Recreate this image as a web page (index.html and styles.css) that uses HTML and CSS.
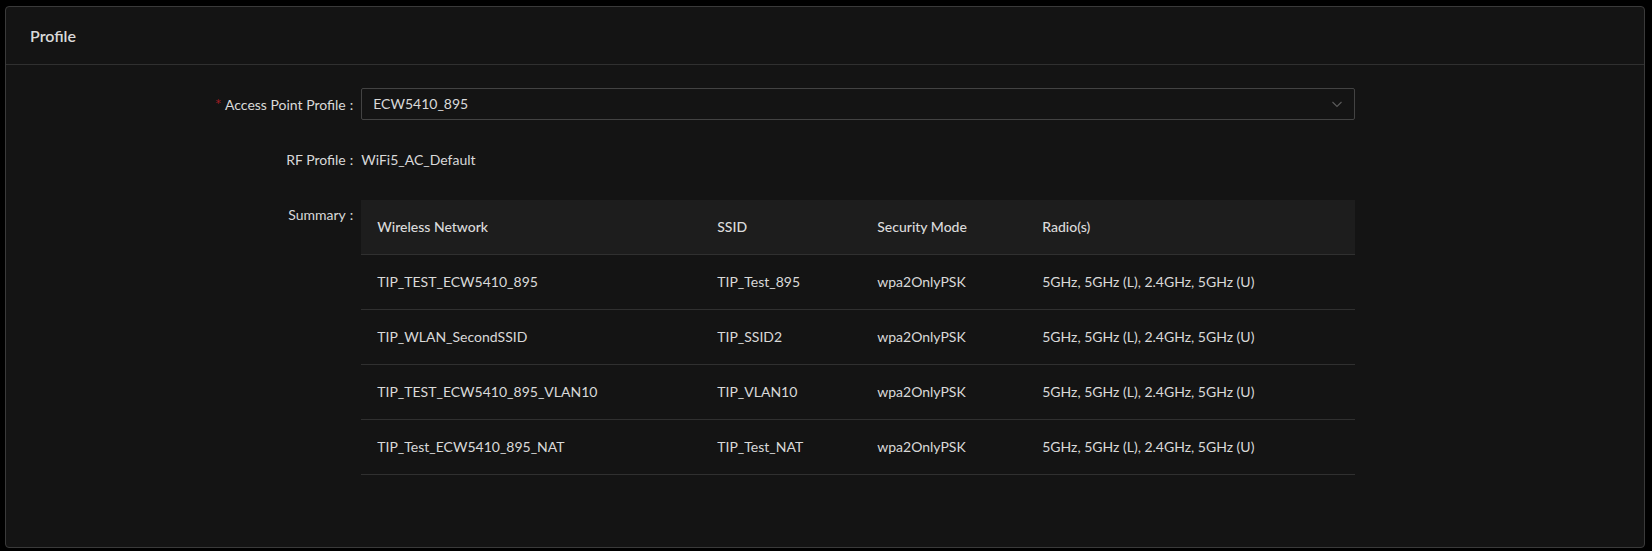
FILE: index.html
```html
<!DOCTYPE html>
<html>
<head>
<meta charset="utf-8">
<link rel="stylesheet" href="styles.css">
</head>
<body>
<div class="card">
  <div class="card-head">Profile</div>
  <div class="card-body">
    <div class="form-item">
      <div class="label"><span class="req">*</span>Access Point Profile<span class="colon">:</span></div>
      <div class="control">
        <div class="select">
          <span class="select-value">ECW5410_895</span>
          <svg class="arrow" width="12" height="12" viewBox="0 0 12 12"><path d="M1.5 4 L6 8.5 L10.5 4" fill="none" stroke="currentColor" stroke-width="1.1"/></svg>
        </div>
      </div>
    </div>
    <div class="form-item">
      <div class="label">RF Profile<span class="colon">:</span></div>
      <div class="control"><span class="static">WiFi5_AC_Default</span></div>
    </div>
    <div class="form-item top">
      <div class="label label-top">Summary<span class="colon">:</span></div>
      <div class="control">
        <table class="table">
          <colgroup><col class="c1"><col class="c2"><col class="c3"><col class="c4"></colgroup>
          <thead>
            <tr><th>Wireless Network</th><th>SSID</th><th>Security Mode</th><th>Radio(s)</th></tr>
          </thead>
          <tbody>
            <tr><td>TIP_TEST_ECW5410_895</td><td>TIP_Test_895</td><td>wpa2OnlyPSK</td><td>5GHz, 5GHz (L), 2.4GHz, 5GHz (U)</td></tr>
            <tr><td>TIP_WLAN_SecondSSID</td><td>TIP_SSID2</td><td>wpa2OnlyPSK</td><td>5GHz, 5GHz (L), 2.4GHz, 5GHz (U)</td></tr>
            <tr><td>TIP_TEST_ECW5410_895_VLAN10</td><td>TIP_VLAN10</td><td>wpa2OnlyPSK</td><td>5GHz, 5GHz (L), 2.4GHz, 5GHz (U)</td></tr>
            <tr><td>TIP_Test_ECW5410_895_NAT</td><td>TIP_Test_NAT</td><td>wpa2OnlyPSK</td><td>5GHz, 5GHz (L), 2.4GHz, 5GHz (U)</td></tr>
          </tbody>
        </table>
      </div>
    </div>
  </div>
</div>
</body>
</html>
```
FILE: styles.css
```css
html, body {
  margin: 0;
  padding: 0;
  background: #000;
}
body {
  padding: 6px 7px 3px 5px;
  font-family: Lato, "Noto Sans", sans-serif;
  font-size: 14px;
  color: rgba(255,255,255,0.85);
  line-height: 1.5715;
}
.card {
  background: #141414;
  border: 1px solid #3a3a3a;
  border-radius: 4px;
  box-sizing: border-box;
  height: 542px;
}
.card-head {
  height: 57px;
  padding: 0 24px;
  display: flex;
  align-items: center;
  font-size: 16px;
  font-weight: 600;
  border-bottom: 1px solid #303030;
  color: rgba(255,255,255,0.85);
}
.card-body {
  padding: 23px 24px 24px;
}
.form-item {
  display: flex;
  margin-bottom: 24px;
  min-height: 32px;
  align-items: center;
}
.form-item.top {
  align-items: flex-start;
}
.label {
  width: 20.8333%;
  flex: none;
  text-align: right;
  box-sizing: border-box;
  height: 32px;
  line-height: 32px;
  white-space: nowrap;
}
.label-top {
  line-height: 30px;
}
.req {
  color: #a61d24;
  font-family: "DejaVu Sans", sans-serif;
  font-size: 11px;
  margin-right: 4px;
  vertical-align: 3px;
}
.colon {
  margin: 0 8px 0 4px;
}
.control {
  width: 62.5%;
  flex: none;
}
.select {
  height: 32px;
  border: 1px solid #434343;
  border-radius: 2px;
  box-sizing: border-box;
  display: flex;
  align-items: center;
  justify-content: space-between;
  padding: 0 11px;
}
.arrow {
  color: rgba(255,255,255,0.3);
}
.static {
  line-height: 32px;
}
.table {
  width: 100%;
  border-collapse: collapse;
  table-layout: fixed;
}
.c1 { width: 340px; }
.c2 { width: 160px; }
.c3 { width: 165px; }
.c4 { width: auto; }
.table th {
  background: #1d1d1d;
  text-align: left;
  font-weight: 500;
  padding: 16px;
  border-bottom: 1px solid #303030;
  color: rgba(255,255,255,0.85);
}
.table td {
  padding: 16px;
  border-bottom: 1px solid #303030;
}
```
